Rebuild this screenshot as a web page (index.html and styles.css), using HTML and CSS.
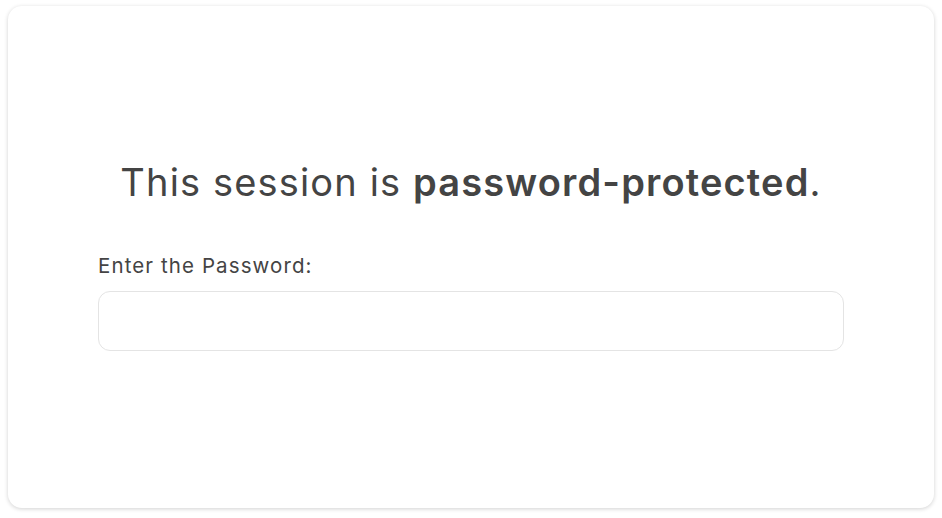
FILE: index.html
```html
<!DOCTYPE html>
<html>
<head>
<meta charset="utf-8">
<link rel="stylesheet" href="styles.css">
</head>
<body>
<div class="card">
  <div class="content">
    <h1 class="title">This session is <strong>password-protected</strong>.</h1>
    <label class="label" for="pw">Enter the Password:</label>
    <input class="input" id="pw" type="password">
  </div>
</div>
</body>
</html>
```

FILE: styles.css
```css
html, body {
  margin: 0;
  padding: 0;
  background: #ffffff;
}
body {
  padding: 6px 8px 10px 8px;
  font-family: "Inter", "Open Sans", sans-serif;
  color: #444444;
}
.card {
  height: 502px;
  box-sizing: border-box;
  background: #ffffff;
  border-radius: 14px;
  box-shadow: 0 1px 4px rgba(0, 0, 0, 0.18);
  display: flex;
  align-items: center;
  justify-content: center;
  padding: 0 90px;
}
.content {
  width: 100%;
  display: flex;
  flex-direction: column;
  margin-top: -4px;
}
.title {
  margin: 0 0 50px 0;
  text-align: center;
  font-size: 38px;
  font-weight: 400;
  letter-spacing: 1.15px;
  line-height: 44px;
  color: #444444;
}
.title strong {
  font-weight: 600;
}
.label {
  font-size: 20.5px;
  letter-spacing: 1.1px;
  line-height: 24px;
  color: #444444;
  margin-bottom: 13px;
}
.input {
  height: 60px;
  box-sizing: border-box;
  border: 1px solid #e4e4e4;
  border-radius: 12px;
  outline: none;
  width: 100%;
  font-size: 18px;
  padding: 0 16px;
  margin: 0;
}
```
